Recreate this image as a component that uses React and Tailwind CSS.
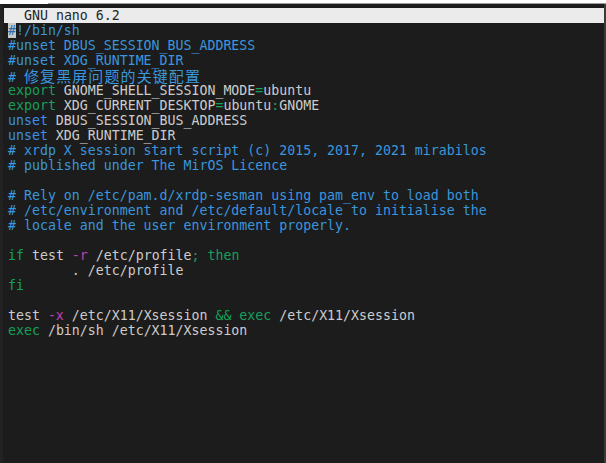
const C = {
  fg: "text-[#cccccc]",
  cm: "text-[#3a96dd]",
  bl: "text-[#3b8eea]",
  gr: "text-[#16a05a]",
  mg: "text-[#c342b6]",
};

const lines = [
  [["cursor", "#"], ["cm", "!/bin/sh"]],
  [["cm", "#unset DBUS_SESSION_BUS_ADDRESS"]],
  [["cm", "#unset XDG_RUNTIME_DIR"]],
  [["cm", "# "], ["cjk", "修复黑屏问题的关键配置"]],
  [["gr", "export"], ["fg", " GNOME_SHELL_SESSION_MODE"], ["gr", "="], ["fg", "ubuntu"]],
  [["gr", "export"], ["fg", " XDG_CURRENT_DESKTOP"], ["gr", "="], ["fg", "ubuntu"], ["gr", ":"], ["fg", "GNOME"]],
  [["bl", "unset"], ["fg", " DBUS_SESSION_BUS_ADDRESS"]],
  [["bl", "unset"], ["fg", " XDG_RUNTIME_DIR"]],
  [["cm", "# xrdp X session start script (c) 2015, 2017, 2021 mirabilos"]],
  [["cm", "# published under The MirOS Licence"]],
  [],
  [["cm", "# Rely on /etc/pam.d/xrdp-sesman using pam_env to load both"]],
  [["cm", "# /etc/environment and /etc/default/locale to initialise the"]],
  [["cm", "# locale and the user environment properly."]],
  [],
  [["gr", "if"], ["fg", " test "], ["mg", "-r"], ["fg", " /etc/profile"], ["gr", "; then"]],
  [["fg", "        . /etc/profile"]],
  [["gr", "fi"]],
  [],
  [["fg", "test "], ["mg", "-x"], ["fg", " /etc/X11/Xsession "], ["gr", "&& exec"], ["fg", " /etc/X11/Xsession"]],
  [["gr", "exec"], ["fg", " /bin/sh /etc/X11/Xsession"]],
];

function Seg({ kind, text }) {
  if (kind === "cursor") {
    return <span className="bg-[#c8c8c8] text-[#2a6fb0]">{text}</span>;
  }
  if (kind === "cjk") {
    return (
      <span className="text-[#3a96dd] text-[15px] leading-[15px] tracking-[1.1px] font-['Noto_Sans_CJK_SC',sans-serif]">
        {text}
      </span>
    );
  }
  return <span className={C[kind]}>{text}</span>;
}

export default function App() {
  return (
    <div className="w-[606px] h-[463px] bg-white flex flex-col font-['DejaVu_Sans_Mono',monospace] text-[13.25px]">
      <div className="h-[3px] bg-white" />
      <div className="h-px bg-[#9c9c9c] ml-[48px]" />
      <div className="flex-1 flex flex-col bg-[#1c1c1c] border-l-[3px] border-l-[#222222] border-r-2 border-r-[#3a3a3a]">
        <div className="h-[4px]" />
        <div className="h-[15px] ml-px bg-[#ebebeb] text-[#262626] leading-[15px] pl-[20px] whitespace-pre">
          GNU nano 6.2
        </div>
        <div className="pl-[5px]">
          {lines.map((segs, i) => (
            <div key={i} className="h-[15px] leading-[15px] whitespace-pre text-[#cccccc] overflow-visible">
              {segs.map(([k, t], j) => (
                <Seg key={j} kind={k} text={t} />
              ))}
            </div>
          ))}
        </div>
      </div>
    </div>
  );
}
